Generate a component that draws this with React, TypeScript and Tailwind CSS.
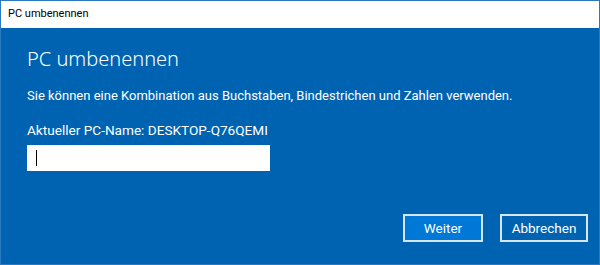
import { useState } from 'react'

export default function App() {
  const [name, setName] = useState('')

  return (
    <div className="w-[600px] h-[265px] flex flex-col border border-[#2b79c2] bg-[#0063b1] font-['Roboto',sans-serif] text-white overflow-hidden">
      {/* title bar */}
      <div className="h-[27px] shrink-0 bg-white flex items-center pl-[7px] text-[11px] text-black">
        PC umbenennen
      </div>

      <div className="flex-1 flex flex-col pl-[26px] pr-[11px]">
        <h1 className="mt-[17px] font-['Noto_Sans',sans-serif] text-[20px] leading-[28px] font-light">PC umbenennen</h1>
        <p className="mt-[14px] text-[13px] leading-[18px]">
          Sie können eine Kombination aus Buchstaben, Bindestrichen und Zahlen verwenden.
        </p>
        <p className="mt-[16px] text-[13.6px] leading-[18px]">Aktueller PC-Name: DESKTOP-Q76QEMI</p>
        <div className="relative mt-[6px] w-[243px] h-[26px]">
          <input
            autoFocus
            value={name}
            onChange={(e) => setName(e.target.value)}
            className="w-full h-full bg-white text-black text-[13px] px-[9px] outline-none caret-black"
          />
          {name === '' && (
            <span className="absolute left-[9px] top-[5px] w-px h-[16px] bg-black pointer-events-none" />
          )}
        </div>

        <div className="mt-auto mb-[22px] flex justify-end gap-[17px]">
          <button className="w-[80px] h-[28px] border-2 border-[#d6e6f5] bg-[#0078d7] text-[13.5px]">
            Weiter
          </button>
          <button className="w-[88px] h-[28px] border-2 border-[#d6e6f5] bg-[#0063b1] text-[13.5px]">
            Abbrechen
          </button>
        </div>
      </div>
    </div>
  )
}
